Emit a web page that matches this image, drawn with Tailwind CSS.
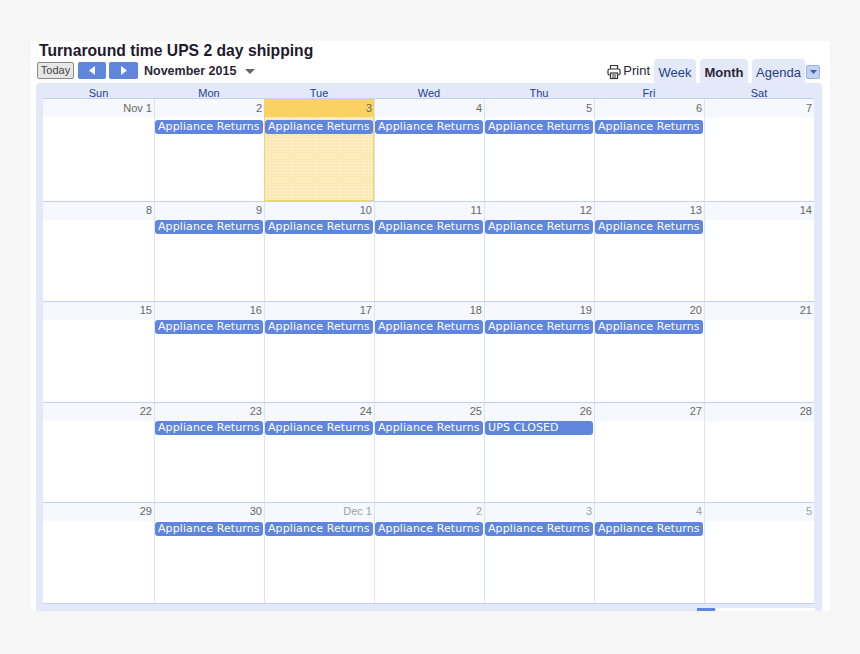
<!DOCTYPE html>
<html lang="en">

<head>
  <meta charset="UTF-8" />
  <title>Turnaround time UPS 2 day shipping</title>
  <script src="https://cdn.jsdelivr.net/npm/@tailwindcss/browser@4"></script>
</head>

<body class="bg-[#f6f6f6] h-[654px] overflow-hidden pt-[41px] pl-[31px] font-['Liberation_Sans',sans-serif]">

  <div class="bg-white w-[799px] h-[570px] flex flex-col overflow-hidden">
    <!-- title -->
    <h1 class="h-[19px] pl-2 text-[15.700px] leading-[19px] font-bold text-[#1f1a2e]">Turnaround time UPS 2 day shipping</h1>

    <!-- toolbar -->
    <div class="h-[23px] flex justify-between pl-[6px] pr-[10px]">
      <div class="flex items-center h-[21px]">
        <button class="w-[37px] h-[17px] bg-[#e6e6e6] border border-[#8a8a8a] rounded-[2px] text-[11px] leading-[15px] text-[#444]">Today</button>
        <button class="w-[28px] h-[17px] ml-[4px] bg-[#5f86dc] rounded-[2px] flex items-center justify-center">
          <svg width="6" height="9" viewBox="0 0 6 9"><path d="M6 0v9L0 4.5z" fill="#fff" /></svg>
        </button>
        <button class="w-[29px] h-[17px] ml-[3px] bg-[#5f86dc] rounded-[2px] flex items-center justify-center">
          <svg width="6" height="9" viewBox="0 0 6 9"><path d="M0 0v9l6-4.500z" fill="#fff" /></svg>
        </button>
        <span class="ml-[6px] pt-[2px] text-[12.500px] font-bold text-[#2b2638]">November 2015</span>
        <svg class="ml-[9px] mt-[1px]" width="10" height="5" viewBox="0 0 10 5"><path d="M0 0h10L5 5z" fill="#666" /></svg>
      </div>

      <div class="flex items-end">
        <svg class="mr-[2px] mb-[3px]" width="14" height="16" viewBox="0 0 14 16" fill="none" stroke="#333" stroke-width="1.200">
          <path d="M3.500 5V1.500h7V5" />
          <rect x="1" y="5" width="12" height="6" rx="1.500" />
          <rect x="3.500" y="9" width="7" height="5.500" fill="#fff" />
          <path d="M5 11h4M5 13h4" />
        </svg>
        <span class="mr-1 mb-[3px] text-[13px] leading-[18px] text-[#2b2638]">Print</span>
        <a class="w-[42px] h-[24px] bg-[#e3e9f9] rounded-t-[4px] text-center text-[13px] leading-[27px] text-[#1f3f8a]">Week</a>
        <a class="ml-1 w-[48px] h-[24px] bg-[#e3e9f9] rounded-t-[4px] text-center text-[13px] leading-[27px] font-bold text-[#2b2638]">Month</a>
        <a class="ml-1 w-[53px] h-[24px] bg-[#e3e9f9] rounded-t-[4px] text-center text-[13px] leading-[27px] text-[#1f3f8a]">Agenda</a>
        <button class="ml-[1px] mb-[4px] w-[14px] h-[14px] bg-[#c3d1f3] border border-[#9db3e6] rounded-[2px] flex items-center justify-center">
          <svg width="7" height="4" viewBox="0 0 7 4"><path d="M0 0h7L3.500 4z" fill="#3b5fb5" /></svg>
        </button>
      </div>
    </div>

    <!-- calendar -->
    <div class="ml-[5px] w-[786px] flex-1 bg-[#e3e9f9] rounded-t-[4px] px-[7px] overflow-hidden">
      <div id="weekdays" class="grid grid-cols-[111px_repeat(6,110px)] h-[15px]"></div>
      <div id="weeks" class="w-[771px] border-t border-b border-[#c3d1f3] bg-white"></div>
      <div class="flex justify-end mt-1 h-[3px]">
        <div class="w-[18px] bg-[#5f86dc]"></div>
        <div class="w-[99px] ml-[1px] bg-white"></div>
      </div>
    </div>
  </div>

  <script>
    const nomes = ["Sun", "Mon", "Tue", "Wed", "Thu", "Fri", "Sat"];
    document.getElementById("weekdays").innerHTML = nomes.map(n =>
      `<div class="text-center text-[11px] leading-[20px] text-[#1f3f8a]">${n}</div>`).join("");

    const ret = "Appliance Returns";
    const semanas = [
      { h: 102, gap: "mt-[3px]", num: "leading-[18px]", dias: [["Nov 1"], ["2", ret], ["3", ret, "today"], ["4", ret], ["5", ret], ["6", ret], ["7"]] },
      { h: 100, gap: "", num: "leading-[16px]", dias: [["8"], ["9", ret], ["10", ret], ["11", ret], ["12", ret], ["13", ret], ["14"]] },
      { h: 101, gap: "", num: "leading-[16px]", dias: [["15"], ["16", ret], ["17", ret], ["18", ret], ["19", ret], ["20", ret], ["21"]] },
      { h: 100, gap: "", num: "leading-[16px]", dias: [["22"], ["23", ret], ["24", ret], ["25", ret], ["26", "UPS CLOSED"], ["27"], ["28"]] },
      { h: 101, gap: "mt-[1px]", num: "leading-[16px]", dias: [["29"], ["30", ret], ["Dec 1", ret, "off"], ["2", ret, "off"], ["3", ret, "off"], ["4", ret, "off"], ["5", "", "off"]] }
    ];

    document.getElementById("weeks").innerHTML = semanas.map((s, i) => {
      const cels = s.dias.map(([num, ev, tipo], j) => {
        const hoje = tipo === "today";
        const corNum = tipo === "off" ? "text-[#a0a0a0]" : "text-[#666]";
        return `
          <div class="${j ? "border-l border-[#dbe3f7]" : ""} ${hoje ? "bg-[#fde9b5] bg-[radial-gradient(#fff8e6_0.6px,#fde9b5_0.8px)] bg-[length:3px_3px] outline outline-1 -outline-offset-1 outline-[#fad163]" : ""}">
            <div class="h-[18px] pr-[2px] text-right text-[11px] ${s.num} ${corNum} ${hoje ? "bg-[#fad163]" : "bg-[#f6f8fd]"}">${num}</div>
            ${ev ? `<div class="${s.gap} mr-[1px] h-[14px] bg-[#5f86dc] rounded-[3px] pl-[3px] font-['DejaVu_Sans',sans-serif] text-[11px] tracking-[0.1px] leading-[14px] text-white whitespace-nowrap overflow-hidden">${ev}</div>` : ""}
          </div>`;
      }).join("");
      return `<div class="grid grid-cols-[111px_repeat(6,110px)] ${i ? "border-t border-[#c3d1f3]" : ""}" style="height:${s.h}px">${cels}</div>`;
    }).join("");
  </script>

</body>

</html>
